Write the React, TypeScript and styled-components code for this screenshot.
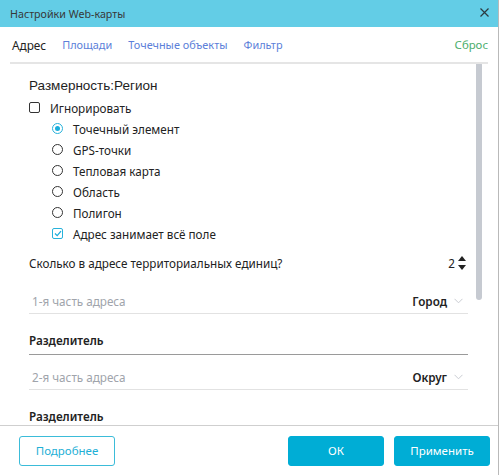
import React from 'react'
import styled, { createGlobalStyle } from 'styled-components'

const GlobalStyle = createGlobalStyle`
  html, body {
    margin: 0;
    padding: 0;
    background: #ffffff;
  }
  body {
    font-family: 'Noto Sans', 'Open Sans', sans-serif;
    font-size: 11.7px;
    color: #222;
  }
`

const Window = styled.div`
  width: 498px;
  height: 475px;
  border-right: 1px solid #b9b9b9;
  display: flex;
  flex-direction: column;
  background: #fff;
  overflow: hidden;
`

const TitleBar = styled.div`
  height: 27px;
  flex: none;
  background: #63cde6;
  display: flex;
  align-items: center;
  justify-content: space-between;
  padding: 0 8px 0 10px;
  color: #383838;
  font-size: 10.7px;
`

const CloseButton = styled.span`
  display: flex;
  width: 12px;
  height: 12px;
  align-items: center;
  justify-content: center;
  margin-top: -2px;
`

const Tabs = styled.div`
  flex: none;
  height: 35px;
  margin: 0 10px;
  padding-left: 2px;
  display: flex;
  align-items: center;
  border-bottom: 2px solid #e5e5e5;
  font-size: 10.9px;
`

const Tab = styled.span<{ $active?: boolean }>`
  margin-right: 16px;
  font-size: ${({ $active }) => ($active ? '11.8px' : 'inherit')};
  color: ${({ $active }) => ($active ? '#222' : '#5c7fd9')};
`

const Reset = styled.span`
  margin-left: auto;
  color: #4cae6c;
  font-size: 11.4px;
`

const Body = styled.div`
  flex: 1;
  min-height: 0;
  margin: 0 10px;
  display: flex;
  overflow: hidden;
`

const Content = styled.div`
  flex: 1;
  padding: 11px 0 0 19px;
`

const ScrollTrack = styled.div`
  width: 20px;
  flex: none;
  padding-left: 8px;
  box-sizing: border-box;
`

const ScrollThumb = styled.div`
  width: 6px;
  height: 238px;
  border-radius: 3px;
  background: #c6cad1;
  margin-top: -2px;
`

const Heading = styled.div`
  font-family: 'Liberation Sans', Arial, sans-serif;
  font-size: 13.5px;
  color: #1e1e1e;
  height: 21px;
  line-height: 21px;
  margin-bottom: 1px;
`

const OptionRow = styled.label<{ $indent?: boolean }>`
  display: flex;
  align-items: center;
  height: 21px;
  padding-left: ${({ $indent }) => ($indent ? '23px' : '0')};
  color: #222;
`

const Box = styled.span<{ $checked?: boolean }>`
  width: 11px;
  height: 11px;
  box-sizing: border-box;
  border: 1px solid ${({ $checked }) => ($checked ? '#27b2db' : '#333')};
  border-radius: 2px;
  margin-right: 10px;
  display: flex;
  align-items: center;
  justify-content: center;
`

const Radio = styled.span<{ $checked?: boolean }>`
  width: 11px;
  height: 11px;
  box-sizing: border-box;
  border-radius: 50%;
  border: 1px solid ${({ $checked }) => ($checked ? '#27b2db' : '#333')};
  margin-right: 10px;
  display: flex;
  align-items: center;
  justify-content: center;
  &::after {
    content: '';
    display: ${({ $checked }) => ($checked ? 'block' : 'none')};
    width: 5px;
    height: 5px;
    border-radius: 50%;
    background: #1aaedc;
  }
`

const Question = styled.div`
  display: flex;
  align-items: center;
  height: 21px;
  margin-top: 8px;
  padding-right: 2px;
`

const Stepper = styled.div`
  margin-left: auto;
  display: flex;
  align-items: center;
  gap: 3px;
`

const Arrows = styled.div`
  display: flex;
  flex-direction: column;
  gap: 4px;
`

const SelectField = styled.div<{ $first?: boolean }>`
  display: flex;
  align-items: center;
  line-height: 18px;
  margin-top: ${({ $first }) => ($first ? '6px' : '0')};
  padding: 13px 5px 3px 3px;
  border-bottom: 1px solid #e2e2e2;
`

const Placeholder = styled.span`
  color: #a0a4ab;
`

const Value = styled.span`
  margin-left: auto;
  font-weight: 600;
  color: #222;
`

const Chevron = styled.span`
  display: flex;
  margin-left: 7px;
`

const Separator = styled.div`
  line-height: 18px;
  padding: 17px 0 5px;
  border-bottom: 1px solid #9a9a9a;
  font-weight: 600;
  color: #222;
`

const Footer = styled.div`
  flex: none;
  height: 49px;
  border-top: 1px solid #cfcfcf;
  display: flex;
  align-items: center;
  padding: 0 8px 0 19px;
  gap: 10px;
`

const Button = styled.button<{ $primary?: boolean }>`
  width: 96px;
  height: 30px;
  box-sizing: border-box;
  border-radius: 3px;
  font-family: 'Noto Sans', 'Open Sans', sans-serif;
  font-size: 11.5px;
  cursor: pointer;
  border: 1px solid ${({ $primary }) => ($primary ? '#00add5' : '#3bbcd9')};
  background: ${({ $primary }) => ($primary ? '#00add5' : '#fff')};
  color: ${({ $primary }) => ($primary ? '#fff' : '#1fb0d6')};
  &:first-child {
    margin-right: auto;
  }
`

const Check = () => (
  <svg width="8" height="7" viewBox="0 0 8 7">
    <path d="M1 3.5 L3.2 5.6 L7 1.2" fill="none" stroke="#1aaedc" strokeWidth="1.3" />
  </svg>
)

const radios = ['Точечный элемент', 'GPS-точки', 'Тепловая карта', 'Область', 'Полигон']

const DownChevron = () => (
  <svg width="9" height="6" viewBox="0 0 9 6">
    <path d="M0.5 0.8 L4.5 4.8 L8.5 0.8" fill="none" stroke="#c9ccd2" strokeWidth="1" />
  </svg>
)

const App: React.FC = () => {
  return (
    <>
      <GlobalStyle />
      <Window>
        <TitleBar>
          <span>Настройки Web-карты</span>
          <CloseButton>
            <svg width="9" height="9" viewBox="0 0 9 9">
              <path d="M0.5 0.5 L8.5 8.5 M8.5 0.5 L0.5 8.5" stroke="#2c3a40" strokeWidth="1.2" />
            </svg>
          </CloseButton>
        </TitleBar>
        <Tabs>
          <Tab $active>Адрес</Tab>
          <Tab>Площади</Tab>
          <Tab>Точечные объекты</Tab>
          <Tab>Фильтр</Tab>
          <Reset>Сброс</Reset>
        </Tabs>
        <Body>
          <Content>
            <Heading>Размерность:Регион</Heading>
            <OptionRow>
              <Box />
              Игнорировать
            </OptionRow>
            {radios.map((r, i) => (
              <OptionRow $indent key={r}>
                <Radio $checked={i === 0} />
                {r}
              </OptionRow>
            ))}
            <OptionRow $indent>
              <Box $checked>
                <Check />
              </Box>
              Адрес занимает всё поле
            </OptionRow>
            <Question>
              Сколько в адресе территориальных единиц?
              <Stepper>
                <span>2</span>
                <Arrows>
                  <svg width="8" height="5" viewBox="0 0 8 5">
                    <path d="M4 0 L8 5 L0 5 Z" fill="#222" />
                  </svg>
                  <svg width="8" height="5" viewBox="0 0 8 5">
                    <path d="M0 0 L8 0 L4 5 Z" fill="#222" />
                  </svg>
                </Arrows>
              </Stepper>
            </Question>
            <SelectField $first>
              <Placeholder>1-я часть адреса</Placeholder>
              <Value>Город</Value>
              <Chevron>
                <DownChevron />
              </Chevron>
            </SelectField>
            <Separator>Разделитель</Separator>
            <SelectField>
              <Placeholder>2-я часть адреса</Placeholder>
              <Value>Округ</Value>
              <Chevron>
                <DownChevron />
              </Chevron>
            </SelectField>
            <Separator>Разделитель</Separator>
          </Content>
          <ScrollTrack>
            <ScrollThumb />
          </ScrollTrack>
        </Body>
        <Footer>
          <Button>Подробнее</Button>
          <Button $primary>ОК</Button>
          <Button $primary>Применить</Button>
        </Footer>
      </Window>
    </>
  )
}

export default App
